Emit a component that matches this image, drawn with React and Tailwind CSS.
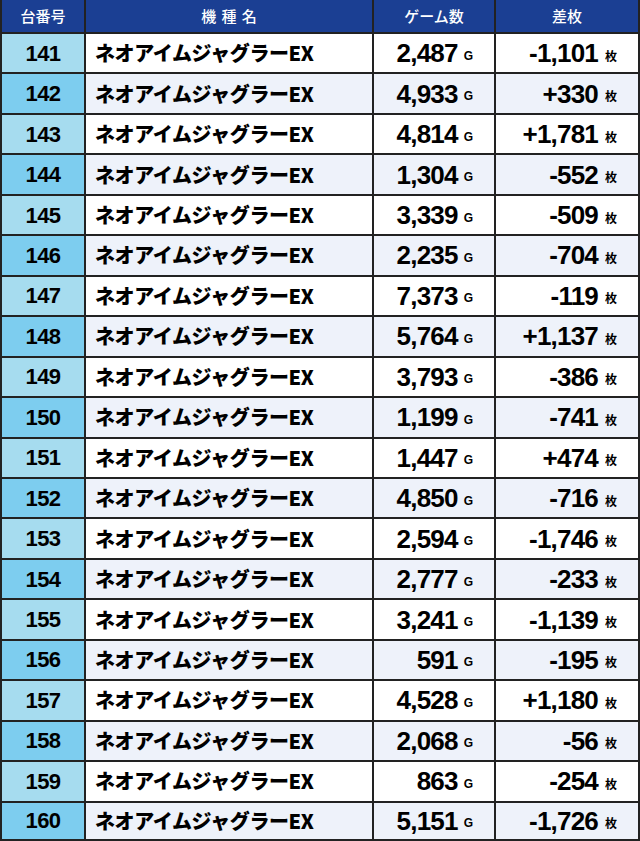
const rows = [
  [141, "2,487", "-1,101"],
  [142, "4,933", "+330"],
  [143, "4,814", "+1,781"],
  [144, "1,304", "-552"],
  [145, "3,339", "-509"],
  [146, "2,235", "-704"],
  [147, "7,373", "-119"],
  [148, "5,764", "+1,137"],
  [149, "3,793", "-386"],
  [150, "1,199", "-741"],
  [151, "1,447", "+474"],
  [152, "4,850", "-716"],
  [153, "2,594", "-1,746"],
  [154, "2,777", "-233"],
  [155, "3,241", "-1,139"],
  [156, "591", "-195"],
  [157, "4,528", "+1,180"],
  [158, "2,068", "-56"],
  [159, "863", "-254"],
  [160, "5,151", "-1,726"],
];

function HeadCell({ children, last }) {
  return (
    <div
      className={`bg-[#1b3f93] border-l-2 border-[#222] flex items-center justify-center text-white text-[15px] font-medium font-['Noto_Sans_CJK_JP','Noto_Sans',sans-serif] ${last ? "border-r-2" : ""}`}
    >
      {children}
    </div>
  );
}

export default function App() {
  return (
    <div className="w-[640px] h-[841px] bg-white grid grid-cols-[84px_288px_122px_146px] grid-rows-[32px_repeat(20,1fr)] text-black">
      <HeadCell>台番号</HeadCell>
      <HeadCell>
        <span className="tracking-[0.35em] pl-[0.35em]">機種名</span>
      </HeadCell>
      <HeadCell>ゲーム数</HeadCell>
      <HeadCell last>差枚</HeadCell>

      {rows.map(([no, games, diff], i) => {
        const even = i % 2 === 1;
        const last = i === rows.length - 1;
        const zebra = even ? "bg-[#eef2fa]" : "bg-white";
        const bb = last ? " border-b-2" : "";
        return [
          <div
            key={no + "a"}
            className={`border-l-2 border-t-2 border-[#222] flex items-center justify-center text-[22px] font-bold tracking-[-0.5px] font-['Liberation_Sans',Arial,sans-serif] ${even ? "bg-[#7dcdef]" : "bg-[#a6dcef]"}${bb}`}
          >
            {no}
          </div>,
          <div
            key={no + "b"}
            className={`border-l-2 border-t-2 border-[#222] flex items-center pl-[9px] text-[20px] font-black tracking-[-0.4px] font-['Noto_Sans_CJK_JP','Noto_Sans',sans-serif] ${zebra}${bb}`}
          >
            ネオアイムジャグラーEX
          </div>,
          <div
            key={no + "c"}
            className={`border-l-2 border-t-2 border-[#222] flex items-center justify-end pr-[21px] font-['Liberation_Sans',Arial,sans-serif] ${zebra}${bb}`}
          >
            <span className="text-[26px] font-bold tracking-[-0.8px] leading-none">{games}</span>
            <span className="text-[12px] font-bold ml-[6px] mt-[5px] leading-none">G</span>
          </div>,
          <div
            key={no + "d"}
            className={`border-l-2 border-r-2 border-t-2 border-[#222] flex items-center justify-end pr-[21px] ${zebra}${bb}`}
          >
            <span className="text-[26px] font-bold tracking-[-0.8px] leading-none font-['Liberation_Sans',Arial,sans-serif]">{diff}</span>
            <span className="text-[12px] font-bold ml-[7px] mt-[5px] leading-none font-['Noto_Sans_CJK_JP','Noto_Sans',sans-serif]">枚</span>
          </div>,
        ];
      })}
    </div>
  );
}
